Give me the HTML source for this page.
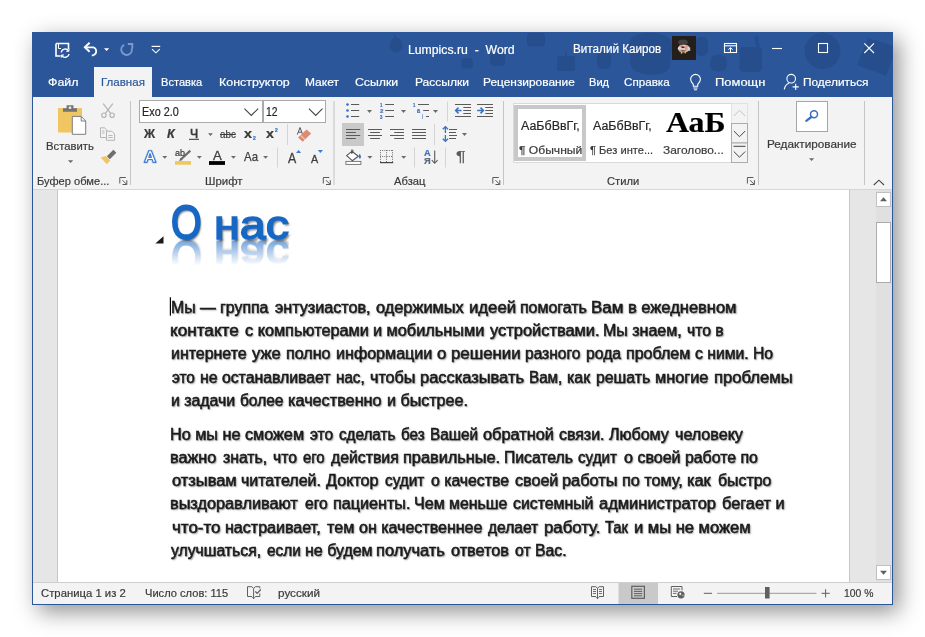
<!DOCTYPE html>
<html lang="ru"><head><meta charset="utf-8"><title>Lumpics.ru - Word</title>
<style>
html,body{margin:0;padding:0;background:#fff;}
body{width:925px;height:637px;position:relative;overflow:hidden;font-family:"Liberation Sans",sans-serif;}
.a{position:absolute;}
.t{position:absolute;white-space:pre;transform-origin:0 0;display:block;-webkit-text-stroke:0.2px currentColor;}
#win{position:absolute;left:32px;top:32px;width:861px;height:573px;background:#f3f3f3;box-shadow:6px 7px 21px rgba(0,0,0,0.43);}
#title{position:absolute;left:32px;top:32px;width:861px;height:65px;background:#2b579a;}
#tab{position:absolute;left:94px;top:67px;width:58px;height:30px;background:#f3f3f3;}
#ribbon{position:absolute;left:33px;top:97px;width:859px;height:92px;background:#f3f3f3;}
#ribline{position:absolute;left:33px;top:189px;width:859px;height:1px;background:#d6d6d6;}
#doc{position:absolute;left:33px;top:190px;width:859px;height:392px;background:#e6e6e6;}
#page{position:absolute;left:57px;top:190px;width:793px;height:392px;background:#fff;border-right:1px solid #c6c6c6;border-left:1px solid #c6c6c6;box-sizing:border-box;}
#status{position:absolute;left:33px;top:582px;width:859px;height:22px;background:#f3f3f3;}
.bl{position:absolute;background:#2b579a;}
.sep{position:absolute;width:1px;background:#d2d2d2;}
</style></head><body>
<div id="win"></div>
<div id="title"></div>
<div id="tab"></div>
<div id="ribbon"></div><div id="ribline"></div>
<div id="doc"></div><div id="page"></div>
<div id="status"></div>
<!-- window border -->
<div class="bl" style="left:32px;top:97px;width:1px;height:508px"></div>
<div class="bl" style="left:892px;top:97px;width:1px;height:508px"></div>
<div class="bl" style="left:32px;top:604px;width:861px;height:1px"></div>
<svg class="a" style="left:0;top:0" width="925" height="637" viewBox="0 0 925 637">
<!-- title bar background pattern -->
<clipPath id="tbc"><rect x="32" y="32" width="861" height="65"/></clipPath>
<g fill="#264e8c" clip-path="url(#tbc)">
 <ellipse cx="396" cy="45" rx="6.500" ry="7.500"/><rect x="394" y="35.500" width="2" height="4" />
 <rect x="490" y="53" width="15" height="13" rx="4"/>
 <rect x="461" y="58" width="12" height="10.500" rx="4"/>
 <rect x="527" y="33" width="18" height="13.500" rx="4"/>
 <rect x="557" y="56" width="18" height="15" rx="3"/><rect x="565" y="51" width="1.500" height="6"/>
 <path d="M633 37 C640 31 662 32 669 38 C675 44 672 52 670 58 C672 66 668 74 658 74 C648 76 640 74 634 70 C627 64 631 56 630 50 C628 44 629 40 633 37 Z"/>
 <rect x="695" y="37" width="13" height="19" rx="6"/>
 <path d="M712 57 C716 53 723 54 726 58 C728 62 727 68 725 70 C720 72 714 72 711 69 C709 65 710 60 712 57 Z"/>
 <rect x="739.500" y="47" width="22.500" height="25" rx="4"/><path d="M754 37 L758 36 L759.500 47 L756.500 47 Z"/>
 <circle cx="822.500" cy="51" r="18"/><rect x="821" y="30" width="3" height="6"/>
 <path d="M868 38 L897 47 L886 76 L857 65 Z"/>
 <rect x="597" y="52" width="14" height="17" rx="5"/>
</g>
<!-- title bar icons -->
<g fill="none" stroke="#fff" stroke-width="1.2">
 <!-- save/autosave -->
 <path d="M56 43.5 H68.5 V49 M56 43.5 V56 H60.5" stroke-width="1.6"/>
 <path d="M58.5 44 V48.5 H61" stroke-width="1"/>
 <path d="M61.2 52.5 A4 4 0 0 1 68.6 51 M69 54 A4 4 0 0 1 61.6 55.3" stroke-width="1.3"/>
 <path d="M68.9 48.6 V51.3 H66.2 M61.3 57.6 V55 H64" stroke-width="1"/>
 <!-- undo -->
 <path d="M84.8 47.3 H93.3 A4.2 4.2 0 0 1 93.3 55.3 H91.8" stroke-width="1.7"/>
 <path d="M89.6 42.800 L84.900 47.300 L89.600 51.800" stroke-width="2"/>
 <!-- customize -->
 <path d="M151.6 46.4 H160.2" stroke-width="1.2"/>
 <path d="M152 49.2 L155.9 52.8 L159.8 49.2" stroke-width="1.1"/>
 <!-- ribbon display -->
 <rect x="724.5" y="43.5" width="12" height="9" stroke-width="1.1"/>
 <path d="M724.5 45.8 H736.5" stroke-width="1.1"/>
 <path d="M730.5 52 V47.8 M728.3 49.8 L730.5 47.6 L732.7 49.8" stroke-width="1"/>
 <!-- min max close -->
 <path d="M772 48.5 H782" stroke-width="1.1"/>
 <rect x="818.5" y="43.5" width="9" height="9" stroke-width="1.1"/>
 <path d="M864.3 43.3 L874 53 M874 43.3 L864.3 53" stroke-width="1.1"/>
 <!-- bulb -->
 <path d="M693.3 86.3 V84.2 C692 82.8 690.6 81.6 690.6 79.3 A4.9 4.9 0 0 1 700.4 79.3 C700.4 81.6 699 82.800 697.7 84.2 V86.3 Z" stroke-width="1.1"/>
 <path d="M693.3 88.0 H697.7 M694 89.8 H697" stroke-width="1"/>
 <!-- share -->
 <circle cx="791.2" cy="78.7" r="4.3" stroke-width="1.1"/>
 <path d="M784.3 89.3 C784.8 85.8 786.8 84 789 83.2" stroke-width="1.1"/>
 <path d="M792.6 86.9 H798.8 M795.7 83.8 V90" stroke-width="1.1"/>
</g>
<!-- undo dropdown -->
<path d="M104 48.2 H109.2 L106.6 50.9 Z" fill="#fff"/>
<!-- redo (dim) -->
<g fill="none" stroke="#7d9bcd" stroke-width="1.900">
 <path d="M124.200 44.900 A5.300 5.300 0 1 0 131.700 48.200"/>
 <path d="M127.800 44 H132.300 V48.600" stroke-width="1.800"/>
</g>
<!-- avatar -->
<rect x="672" y="36" width="24" height="24" fill="#241f1c"/>
<ellipse cx="683" cy="42.300" rx="4.800" ry="2.800" fill="#45413f"/>
<ellipse cx="683.800" cy="48.500" rx="6" ry="3.800" fill="#ddd8d4"/>
<rect x="679.800" y="45.200" width="3.400" height="2" fill="#f0927a"/>
<rect x="685" y="45.500" width="2.600" height="5" fill="#f0927a"/>
<rect x="679" y="49.500" width="3.500" height="2" fill="#f0927a"/>
<rect x="681.500" y="46.500" width="3" height="1.600" fill="#2a2a35"/>
<rect x="681.500" y="50.400" width="4" height="1" fill="#2a2a2a"/>
<rect x="680.800" y="52" width="1.600" height="1.600" fill="#f4c430"/><rect x="684.500" y="51.700" width="1.600" height="1.600" fill="#f4c430"/>
<rect x="689.200" y="47.500" width="1" height="3.500" fill="#ddd8d4"/>

<!-- clipboard group -->
<rect x="58" y="108" width="24" height="24.5" fill="#efc662"/>
<path d="M63 111.8 V108.3 H66.6 V105.2 H73.4 V108.3 H77 V111.8 Z" fill="#737373"/>
<rect x="68.8" y="106.6" width="2.4" height="2.2" fill="#f3f3f3"/>
<path d="M72.3 116.4 H81.2 L85.7 121 V134.3 H72.3 Z" fill="#fff" stroke="#7d7d7d" stroke-width="1"/>
<path d="M81.2 116.4 V121 H85.7" fill="none" stroke="#7d7d7d" stroke-width="1"/>
<path d="M68 160.2 H73.2 L70.6 163 Z" fill="#6a6a6a"/>
<!-- scissors -->
<g fill="none" stroke="#b4b4b4" stroke-width="1.2">
 <path d="M103.2 103.6 L110.6 113.4 M112.8 103.600 L105.4 113.4"/>
 <circle cx="103.9" cy="115.2" r="2.2"/><circle cx="112.1" cy="115.2" r="2.2"/>
</g>
<!-- copy -->
<g fill="#f3f3f3" stroke="#b4b4b4" stroke-width="1">
 <path d="M100.5 127.800 H104.5 L106.800 130 V137.500 H100.5 Z"/>
 <path d="M106.5 131.2 H111.800 L114.6 134 V140.300 H106.5 Z"/>
 <path d="M108.3 135.5 H112.700 M108.300 137.500 H112.700" stroke-width="0.9"/>
 <path d="M102 131 H104.5 M102 133 H104.5" stroke-width="0.9"/>
</g>
<!-- format painter -->
<path d="M113.400 149.800 L116.300 152.700 L109.800 159.200 L106.900 156.300 Z" fill="#6e6e6e"/>
<path d="M105.800 156 L110.200 160.400 L106.800 164.200 L100.600 157.600 Z" fill="#efc662"/>

<!-- font group -->
<rect x="139.500" y="100.500" width="123" height="22" fill="#fff" stroke="#ababab"/>
<rect x="263.500" y="100.500" width="62" height="22" fill="#fff" stroke="#ababab"/>
<path d="M244.400 108.600 L251.300 115.500 L258.200 108.600" fill="none" stroke="#444" stroke-width="1.100"/>
<path d="M308.900 108.600 L315.700 115.500 L322.500 108.600" fill="none" stroke="#444" stroke-width="1.100"/>
<!-- underline of Ч -->
<rect x="189" y="138.800" width="10" height="1.100" fill="#444"/>
<g fill="#6a6a6a">
<path d="M208 133.200 H212.900 L210.450 135.900 Z"/>
<path d="M162.300 156 H167.200 L164.750 158.800 Z"/>
<path d="M196.900 156 H201.800 L199.350 158.800 Z"/>
<path d="M231 156 H235.900 L233.450 158.800 Z"/>
<path d="M263.100 156 H268 L265.550 158.800 Z"/>
</g>
<rect x="287" y="124" width="1" height="21" fill="#d4d4d4"/>
<rect x="277" y="147.500" width="1" height="20" fill="#d4d4d4"/>
<!-- clear formatting -->
<path d="M297.300 134.600 L300 127.500 L302.700 134.600 M298.300 132.200 H301.700" fill="none" stroke="#555" stroke-width="1"/>
<path d="M306.500 129.500 L311.200 133.500 L302.700 141.800 L298 137.600 Z" fill="#e08b71"/>
<path d="M300.500 135.300 L305 139.500" stroke="#f3f3f3" stroke-width="0.9"/>
<!-- text effects A -->
<path d="M144.300 162.300 L148.800 150.700 H151.400 L155.900 162.300 H153.100 L152.150 159.500 H148 L147.050 162.300 Z M148.800 157.300 H151.350 L150.100 153.500 Z" fill="#fff" stroke="#c3d8f2" stroke-width="2.600" stroke-linejoin="round" fill-rule="evenodd"/>
<path d="M144.300 162.300 L148.800 150.700 H151.400 L155.900 162.300 H153.100 L152.150 159.500 H148 L147.050 162.300 Z M148.800 157.300 H151.350 L150.100 153.500 Z" fill="#fff" stroke="#3b7bd0" stroke-width="1.150" stroke-linejoin="round" fill-rule="evenodd"/>
<!-- highlighter -->
<rect x="175" y="161.100" width="16" height="3.600" fill="#f0c75e"/>
<path d="M190.300 150.700 L180.800 159.500" stroke="#6e6e6e" stroke-width="2.300" fill="none"/>
<path d="M180.600 157.800 L179 161.300 L182.600 160" fill="#6e6e6e"/>
<!-- font color bar -->
<rect x="209" y="161.100" width="16" height="3.800" fill="#000"/>
<!-- grow/shrink triangles -->
<path d="M296 153 L298.600 150.100 L301.200 153 Z" fill="#3b7bd0"/>
<path d="M317.800 150.100 H323 L320.400 153 Z" fill="#3b7bd0"/>

<!-- paragraph group -->
<rect x="342" y="123" width="22" height="23" fill="#c9c9c9"/>
<g fill="#3b6fc0">
 <circle cx="347.500" cy="104.500" r="1.350"/><circle cx="347.500" cy="110.500" r="1.350"/><circle cx="347.500" cy="116.500" r="1.350"/>
</g>
<g stroke="#5a5a5a" stroke-width="1.200" fill="none">
 <path d="M351 104.500 H359.200 M351 110.500 H359.200 M351 116.500 H359.200"/>
 <path d="M385.200 104.500 H394 M385.200 110.500 H394 M385.200 116.500 H394"/>
 <path d="M418 104.500 H429 M423.200 110.500 H429 M426 116.500 H429"/>
 <!-- align icons -->
 <path d="M346 129.500 H360.200 M346 132.500 H355.800 M346 135.500 H360.200 M346 138.500 H355.800"/>
 <path d="M368 129.500 H382 M370.100 132.500 H379.900 M368 135.500 H382 M370.100 138.500 H379.900"/>
 <path d="M390 129.500 H404 M394.200 132.500 H404 M390 135.500 H404 M394.200 138.500 H404"/>
 <path d="M412 129.500 H426 M412 132.500 H426 M412 135.500 H426 M412 138.500 H426"/>
 <!-- indent icons -->
 <path d="M455 104.500 H471 M463.300 107.500 H471 M463.300 110.500 H471 M463.300 113.500 H471 M455 116.500 H471"/>
 <path d="M477 104.500 H493 M485.300 107.500 H493 M485.300 110.500 H493 M485.300 113.500 H493 M477 116.500 H493"/>
 <!-- line spacing lines -->
 <path d="M449 129.500 H457 M449 132.500 H456 M449 135.500 H457 M449 138.500 H456"/>
</g>
<g fill="#6a6a6a">
 <path d="M367 110.100 H372 L369.500 112.900 Z"/>
 <path d="M401 110.100 H406 L403.500 112.900 Z"/>
 <path d="M433 110.100 H438 L435.500 112.900 Z"/>
 <path d="M462 133 H467 L464.500 135.900 Z"/>
 <path d="M367.400 156 H372.400 L369.900 158.800 Z"/>
 <path d="M401.200 156 H406.200 L403.700 158.800 Z"/>
</g>
<g stroke="#3b6fc0" stroke-width="1.500" fill="none">
 <path d="M455.600 110.500 H461.500 M458.500 107.600 L455.600 110.500 L458.500 113.400"/>
 <path d="M477.200 110.500 H483.400 M480.500 107.600 L483.400 110.500 L480.500 113.400"/>
 <path d="M445.400 126.700 V133 M442.800 129.300 L445.400 126.600 L448 129.300" stroke-width="1.300"/>
 <path d="M445.400 135 V141.300 M442.800 138.700 L445.400 141.400 L448 138.700" stroke-width="1.300"/>
</g>
<rect x="447" y="101.500" width="1" height="20" fill="#d4d4d4"/>
<rect x="434" y="124" width="1" height="21" fill="#d4d4d4"/>
<rect x="414" y="147.500" width="1" height="20" fill="#d4d4d4"/>
<rect x="445" y="147.500" width="1" height="20" fill="#d4d4d4"/>
<!-- shading -->
<rect x="345.900" y="161.400" width="15" height="3" fill="#fff" stroke="#6e6e6e" stroke-width="0.900"/>
<path d="M351.800 151.300 L358.300 156.300 L352.300 160.700 L346.600 155.600 Z" fill="#fff" stroke="#555" stroke-width="1.100" stroke-linejoin="round"/>
<path d="M351.800 154 V149.700 L353.800 151.200" fill="none" stroke="#555" stroke-width="1"/>
<path d="M359.600 153.800 C361.300 156 361.500 158 359.900 158.700 C358.400 158 358.500 156 359.600 153.800 Z" fill="#3b6fc0"/>
<!-- borders -->
<g stroke="#6e6e6e" stroke-width="1" stroke-dasharray="1 1.200" fill="none">
 <path d="M380 150.500 H393 M380 156.500 H393 M380.500 150 V162 M386.500 150 V162 M392.500 150 V162"/>
</g>
<path d="M380 162.600 H393.200" stroke="#444" stroke-width="1.200"/>
<!-- sort arrow -->
<path d="M434.700 150.500 V163 M431.800 160.200 L434.700 163.300 L437.600 160.200" fill="none" stroke="#5a5a5a" stroke-width="1.100"/>

<!-- group separators -->
<g fill="#c4c4c4">
<rect x="130" y="101" width="1" height="84"/><rect x="333.500" y="101" width="1" height="84"/>
<rect x="503" y="101" width="1" height="84"/><rect x="758" y="101" width="1" height="84"/><rect x="864" y="101" width="1" height="84"/>
</g>
<!-- launchers -->
<defs><g id="ln" fill="none" stroke="#5a5a5a" stroke-width="1">
 <path d="M0.500 6.500 V0.500 H6.500"/><path d="M3.200 3.200 L7.300 7.300"/><path d="M7.500 3.200 V7.500 H3.200"/>
</g></defs>
<use href="#ln" x="119.300" y="177"/><use href="#ln" x="322.800" y="177"/><use href="#ln" x="492.300" y="177"/><use href="#ln" x="746.900" y="177"/>
<!-- styles gallery -->
<rect x="513.500" y="103.500" width="234" height="59" fill="#fff" stroke="#dadada"/>
<rect x="516" y="107" width="68" height="52" fill="#fff" stroke="#c8c8c8" stroke-width="4"/>
<rect x="731.500" y="103.500" width="16" height="20" fill="#f3f3f3" stroke="#e1e1e1"/>
<rect x="731.500" y="123.500" width="16" height="19.500" fill="#f3f3f3" stroke="#ababab"/>
<rect x="731.500" y="143" width="16" height="19.500" fill="#f3f3f3" stroke="#ababab"/>
<path d="M733.800 116 L739.500 110.300 L745.200 116" fill="none" stroke="#c4c4c4" stroke-width="1"/>
<path d="M733.800 131 L739.500 136.700 L745.200 131" fill="none" stroke="#444" stroke-width="1"/>
<path d="M733.500 146.300 H745.500 M733.800 151.500 L739.500 157.200 L745.200 151.500" fill="none" stroke="#444" stroke-width="1"/>
<!-- editing -->
<rect x="796.500" y="101.500" width="31" height="30" fill="#fff" stroke="#a6a6a6"/>
<circle cx="814" cy="114.300" r="3.500" fill="none" stroke="#3b6fc0" stroke-width="1.500"/>
<path d="M811.300 117 L806.300 120.800" stroke="#3b6fc0" stroke-width="2.200" stroke-linecap="round"/>
<path d="M809 158.300 H814.200 L811.600 161.100 Z" fill="#6a6a6a"/>
<path d="M873.800 185 L878.900 180.200 L884 185" fill="none" stroke="#444" stroke-width="1.100"/>
<!-- doc collapse triangle -->
<path d="M163.500 236.300 V243.600 H155.300 Z" fill="#1a1a1a"/>
<!-- cursor -->
<rect x="169.800" y="297.300" width="1.200" height="18.400" fill="#000"/>
<!-- scrollbar -->
<rect x="876" y="190" width="16" height="392" fill="#dfe0df"/>
<rect x="876.500" y="192.500" width="14" height="14" fill="#fff" stroke="#c0c0c0"/>
<path d="M880 201.200 L883.500 197.200 L887 201.200 Z" fill="#606060"/>
<rect x="876.500" y="222.500" width="14" height="60" fill="#fff" stroke="#ababab"/>
<rect x="876.500" y="565.500" width="14" height="14" fill="#fff" stroke="#c0c0c0"/>
<path d="M880 570.800 H887 L883.500 574.800 Z" fill="#606060"/>
<!-- status bar -->
<rect x="33" y="582" width="859" height="1" fill="#cfcfcf"/>
<rect x="618.500" y="583" width="39.500" height="21" fill="#c9c9c9"/>
<g fill="none" stroke="#5f5f5f" stroke-width="1">
 <!-- book/spell -->
 <path d="M253.600 598.600 V588.400 L251.800 586.700 H247.500 V596.500 H252"/>
 <path d="M253.600 588.400 L255.400 586.700 H259.800 V588.500 M259.800 593.500 V596.500 H255.200"/>
 <path d="M255.300 591.500 L257.200 593.300 L260.800 589.500" stroke-width="1.200"/>
 <path d="M252.200 597.200 L253.600 598.700 L255 597.200" />
 <!-- read mode -->
 <path d="M597.500 598.600 V588.200 L595.800 586.700 H591.500 V596.500 H596"/>
 <path d="M597.500 588.200 L599.200 586.700 H603.500 V596.500 H599"/>
 <path d="M593 589.500 H596 M593 591.500 H596 M593 593.500 H596 M599 589.500 H602 M599 591.500 H602 M599 593.500 H602" stroke-width="0.900"/>
 <path d="M596.100 597.200 L597.500 598.700 L598.900 597.200"/>
 <!-- print layout -->
 <rect x="631.800" y="586.300" width="12.600" height="12" stroke-width="1.200"/>
 <path d="M634 589.200 H642.200 M634 591.400 H642.200 M634 593.600 H642.200 M634 595.800 H642.200" stroke-width="1"/>
 <!-- web layout -->
 <path d="M677 596.500 H671.300 V586.500 H682 V590.300"/>
 <path d="M673 589 H680.200 M673 591.200 H678 M673 593.400 H676.500" stroke-width="0.900"/>
</g>
<circle cx="681" cy="594.800" r="3.600" fill="#5f5f5f"/>
<path d="M679 593.500 L680.500 592.500 L681.500 594 L680 595.500 Z M682.300 595 L683.500 594.500 L683.200 596.500 Z" fill="#f3f3f3"/>
<!-- zoom slider -->
<rect x="703.800" y="592.800" width="8.200" height="1" fill="#5f5f5f"/>
<rect x="717" y="592.800" width="99.500" height="1" fill="#9a9a9a"/>
<rect x="765" y="587" width="4.600" height="11.500" fill="#5f5f5f"/>
<rect x="821.500" y="592.800" width="8.200" height="1" fill="#5f5f5f"/>
<rect x="825.100" y="589.200" width="1" height="8.200" fill="#5f5f5f"/>

</svg>
<span class="t" style="left:408.00px;top:44.01px;font-size:12.2px;line-height:12.2px;color:#ffffff;transform:scaleX(1.0045);">Lumpics.ru  -  Word</span>
<span class="t" style="left:572.70px;top:43.00px;font-size:12px;line-height:12px;color:#ffffff;transform:scaleX(0.9745);">Виталий Каиров</span>
<span class="t" style="left:47.60px;top:76.01px;font-size:11.6px;line-height:11.6px;color:#ffffff;transform:scaleX(1.0707);">Файл</span>
<span class="t" style="left:161.20px;top:76.01px;font-size:11.6px;line-height:11.6px;color:#ffffff;transform:scaleX(0.9555);">Вставка</span>
<span class="t" style="left:218.80px;top:76.01px;font-size:11.6px;line-height:11.6px;color:#ffffff;transform:scaleX(1.0707);">Конструктор</span>
<span class="t" style="left:305.00px;top:76.01px;font-size:11.6px;line-height:11.6px;color:#ffffff;transform:scaleX(1.0328);">Макет</span>
<span class="t" style="left:355.30px;top:76.01px;font-size:11.6px;line-height:11.6px;color:#ffffff;transform:scaleX(1.0585);">Ссылки</span>
<span class="t" style="left:414.50px;top:76.01px;font-size:11.6px;line-height:11.6px;color:#ffffff;transform:scaleX(1.0376);">Рассылки</span>
<span class="t" style="left:483.20px;top:76.01px;font-size:11.6px;line-height:11.6px;color:#ffffff;transform:scaleX(1.0261);">Рецензирование</span>
<span class="t" style="left:589.20px;top:76.01px;font-size:11.6px;line-height:11.6px;color:#ffffff;transform:scaleX(0.9571);">Вид</span>
<span class="t" style="left:624.10px;top:76.01px;font-size:11.6px;line-height:11.6px;color:#ffffff;transform:scaleX(1.0036);">Справка</span>
<span class="t" style="left:714.80px;top:76.01px;font-size:11.6px;line-height:11.6px;color:#ffffff;transform:scaleX(1.1154);">Помощн</span>
<span class="t" style="left:803.00px;top:76.01px;font-size:11.6px;line-height:11.6px;color:#ffffff;transform:scaleX(1.0229);">Поделиться</span>
<span class="t" style="left:101.20px;top:76.01px;font-size:11.6px;line-height:11.6px;color:#2b579a;transform:scaleX(0.9943);">Главная</span>
<span class="t" style="left:46.20px;top:141.00px;font-size:11.5px;line-height:11.5px;color:#3a3a3a;transform:scaleX(0.9804);">Вставить</span>
<span class="t" style="left:36.80px;top:176.00px;font-size:11.5px;line-height:11.5px;color:#3a3a3a;transform:scaleX(0.9654);">Буфер обме...</span>
<span class="t" style="left:141.80px;top:106.00px;font-size:12px;line-height:12px;color:#262626;transform:scaleX(0.9020);">Exo 2.0</span>
<span class="t" style="left:266.20px;top:106.00px;font-size:12px;line-height:12px;color:#262626;transform:scaleX(0.8630);">12</span>
<span class="t" style="left:204.80px;top:176.00px;font-size:11.5px;line-height:11.5px;color:#3a3a3a;transform:scaleX(0.9904);">Шрифт</span>
<span class="t" style="left:394.20px;top:176.00px;font-size:11.5px;line-height:11.5px;color:#3a3a3a;transform:scaleX(0.9733);">Абзац</span>
<span class="t" style="left:607.20px;top:176.00px;font-size:11.5px;line-height:11.5px;color:#3a3a3a;transform:scaleX(0.9723);">Стили</span>
<span class="t" style="left:521.00px;top:120.00px;font-size:12.5px;line-height:12.5px;color:#262626;transform:scaleX(0.9953);">АаБбВвГг,</span>
<span class="t" style="left:518.60px;top:145.00px;font-size:11.5px;line-height:11.5px;color:#3a3a3a;transform:scaleX(1.0506);">¶ Обычный</span>
<span class="t" style="left:593.10px;top:120.00px;font-size:12.5px;line-height:12.5px;color:#262626;transform:scaleX(0.9953);">АаБбВвГг,</span>
<span class="t" style="left:590.00px;top:145.00px;font-size:11.5px;line-height:11.5px;color:#3a3a3a;transform:scaleX(0.9658);">¶ Без инте...</span>
<span class="t" style="left:665.60px;top:108.00px;font-size:29.5px;line-height:29.5px;color:#000000;transform:scaleX(1.0808);font-family:'Liberation Serif', serif;font-weight:bold;">АаБ</span>
<span class="t" style="left:663.00px;top:145.00px;font-size:11.5px;line-height:11.5px;color:#3a3a3a;transform:scaleX(1.0372);">Заголово...</span>
<span class="t" style="left:767.10px;top:139.00px;font-size:11.5px;line-height:11.5px;color:#3a3a3a;transform:scaleX(1.0228);">Редактирование</span>
<span class="t" style="left:144.48px;top:128.00px;font-size:12.5px;line-height:12.5px;color:#3a3a3a;transform:scaleX(0.9769);font-weight:bold;">Ж</span>
<span class="t" style="left:167.20px;top:128.00px;font-size:12.5px;line-height:12.5px;color:#3a3a3a;transform:scaleX(1.0111);font-weight:bold;font-style:italic;">К</span>
<span class="t" style="left:189.60px;top:128.00px;font-size:12.5px;line-height:12.5px;color:#3a3a3a;transform:scaleX(0.9750);-webkit-text-stroke:0.7px #3a3a3a;">Ч</span>
<span class="t" style="left:220.00px;top:129.00px;font-size:11.5px;line-height:11.5px;color:#3a3a3a;transform:scaleX(0.8514);text-decoration:line-through;">abc</span>
<span class="t" style="left:244.20px;top:128.00px;font-size:12.5px;line-height:12.5px;color:#3a3a3a;transform:scaleX(1.1571);font-weight:bold;">x</span>
<span class="t" style="left:252.80px;top:134.80px;font-size:6px;line-height:6px;color:#2b6cc4;transform:scaleX(0.8500);font-weight:bold;">2</span>
<span class="t" style="left:266.20px;top:128.00px;font-size:12.5px;line-height:12.5px;color:#3a3a3a;transform:scaleX(1.1429);font-weight:bold;">x</span>
<span class="t" style="left:274.90px;top:127.21px;font-size:6px;line-height:6px;color:#2b6cc4;transform:scaleX(0.8250);font-weight:bold;">2</span>
<span class="t" style="left:243.50px;top:150.00px;font-size:13px;line-height:13px;color:#3a3a3a;transform:scaleX(0.8818);-webkit-text-stroke:0.25px #444;">Aa</span>
<span class="t" style="left:212.80px;top:149.00px;font-size:13.5px;line-height:13.5px;color:#3a3a3a;transform:scaleX(0.9778);-webkit-text-stroke:0.3px #444;">A</span>
<span class="t" style="left:288.40px;top:151.00px;font-size:14px;line-height:14px;color:#3a3a3a;transform:scaleX(0.8800);-webkit-text-stroke:0.3px #444;">A</span>
<span class="t" style="left:311.20px;top:154.00px;font-size:11.5px;line-height:11.5px;color:#3a3a3a;transform:scaleX(0.9375);-webkit-text-stroke:0.3px #444;">A</span>
<span class="t" style="left:41.40px;top:588.00px;font-size:11.5px;line-height:11.5px;color:#3a3a3a;transform:scaleX(0.9837);">Страница 1 из 2</span>
<span class="t" style="left:145.20px;top:588.00px;font-size:11.5px;line-height:11.5px;color:#3a3a3a;transform:scaleX(0.9663);">Число слов: 115</span>
<span class="t" style="left:278.40px;top:588.00px;font-size:11.5px;line-height:11.5px;color:#3a3a3a;transform:scaleX(1.0185);">русский</span>
<span class="t" style="left:844.00px;top:588.00px;font-size:11.5px;line-height:11.5px;color:#3a3a3a;transform:scaleX(0.9017);">100 %</span>
<span class="t" style="left:171.31px;top:300.00px;font-size:16px;line-height:16px;color:#1a1a1a;transform:scaleX(0.9877);text-shadow:1px 1.2px 1.6px rgba(0,0,0,0.5);-webkit-text-stroke:0.55px #1a1a1a;">Мы — группа</span>
<span class="t" style="left:274.80px;top:300.00px;font-size:16px;line-height:16px;color:#1a1a1a;transform:scaleX(1.0093);text-shadow:1px 1.2px 1.6px rgba(0,0,0,0.5);-webkit-text-stroke:0.55px #1a1a1a;">энтузиастов,</span>
<span class="t" style="left:376.00px;top:300.00px;font-size:16px;line-height:16px;color:#1a1a1a;transform:scaleX(1.0219);text-shadow:1px 1.2px 1.6px rgba(0,0,0,0.5);-webkit-text-stroke:0.55px #1a1a1a;">одержимых</span>
<span class="t" style="left:468.76px;top:300.00px;font-size:16px;line-height:16px;color:#1a1a1a;transform:scaleX(1.0448);text-shadow:1px 1.2px 1.6px rgba(0,0,0,0.5);-webkit-text-stroke:0.55px #1a1a1a;">идеей</span>
<span class="t" style="left:519.90px;top:300.00px;font-size:16px;line-height:16px;color:#1a1a1a;transform:scaleX(0.9951);text-shadow:1px 1.2px 1.6px rgba(0,0,0,0.5);-webkit-text-stroke:0.55px #1a1a1a;">помогать</span>
<span class="t" style="left:591.44px;top:300.00px;font-size:16px;line-height:16px;color:#1a1a1a;transform:scaleX(1.0570);text-shadow:1px 1.2px 1.6px rgba(0,0,0,0.5);-webkit-text-stroke:0.55px #1a1a1a;">Вам</span>
<span class="t" style="left:627.77px;top:300.00px;font-size:16px;line-height:16px;color:#1a1a1a;transform:scaleX(1.0308);text-shadow:1px 1.2px 1.6px rgba(0,0,0,0.5);-webkit-text-stroke:0.55px #1a1a1a;">в ежедневном</span>
<span class="t" style="left:170.43px;top:323.00px;font-size:16px;line-height:16px;color:#1a1a1a;transform:scaleX(1.0713);text-shadow:1px 1.2px 1.6px rgba(0,0,0,0.5);-webkit-text-stroke:0.55px #1a1a1a;">контакте</span>
<span class="t" style="left:245.40px;top:323.00px;font-size:16px;line-height:16px;color:#1a1a1a;transform:scaleX(1.0147);text-shadow:1px 1.2px 1.6px rgba(0,0,0,0.5);-webkit-text-stroke:0.55px #1a1a1a;">с компьютерами</span>
<span class="t" style="left:373.28px;top:323.00px;font-size:16px;line-height:16px;color:#1a1a1a;transform:scaleX(1.0178);text-shadow:1px 1.2px 1.6px rgba(0,0,0,0.5);-webkit-text-stroke:0.55px #1a1a1a;">и мобильными</span>
<span class="t" style="left:489.70px;top:323.00px;font-size:16px;line-height:16px;color:#1a1a1a;transform:scaleX(1.0259);text-shadow:1px 1.2px 1.6px rgba(0,0,0,0.5);-webkit-text-stroke:0.55px #1a1a1a;">устройствами.</span>
<span class="t" style="left:602.90px;top:323.00px;font-size:16px;line-height:16px;color:#1a1a1a;transform:scaleX(0.9995);text-shadow:1px 1.2px 1.6px rgba(0,0,0,0.5);-webkit-text-stroke:0.55px #1a1a1a;">Мы знаем,</span>
<span class="t" style="left:687.20px;top:323.00px;font-size:16px;line-height:16px;color:#1a1a1a;transform:scaleX(0.9829);text-shadow:1px 1.2px 1.6px rgba(0,0,0,0.5);-webkit-text-stroke:0.55px #1a1a1a;">что в</span>
<span class="t" style="left:170.50px;top:346.00px;font-size:16px;line-height:16px;color:#1a1a1a;transform:scaleX(0.9951);text-shadow:1px 1.2px 1.6px rgba(0,0,0,0.5);-webkit-text-stroke:0.55px #1a1a1a;">интернете</span>
<span class="t" style="left:252.30px;top:346.00px;font-size:16px;line-height:16px;color:#1a1a1a;transform:scaleX(1.0329);text-shadow:1px 1.2px 1.6px rgba(0,0,0,0.5);-webkit-text-stroke:0.55px #1a1a1a;">уже</span>
<span class="t" style="left:286.19px;top:346.00px;font-size:16px;line-height:16px;color:#1a1a1a;transform:scaleX(1.0050);text-shadow:1px 1.2px 1.6px rgba(0,0,0,0.5);-webkit-text-stroke:0.55px #1a1a1a;">полно</span>
<span class="t" style="left:335.89px;top:346.00px;font-size:16px;line-height:16px;color:#1a1a1a;transform:scaleX(1.0071);text-shadow:1px 1.2px 1.6px rgba(0,0,0,0.5);-webkit-text-stroke:0.55px #1a1a1a;">информации</span>
<span class="t" style="left:437.40px;top:346.00px;font-size:16px;line-height:16px;color:#1a1a1a;transform:scaleX(1.0502);text-shadow:1px 1.2px 1.6px rgba(0,0,0,0.5);-webkit-text-stroke:0.55px #1a1a1a;">о решении</span>
<span class="t" style="left:525.13px;top:346.00px;font-size:16px;line-height:16px;color:#1a1a1a;transform:scaleX(0.9702);text-shadow:1px 1.2px 1.6px rgba(0,0,0,0.5);-webkit-text-stroke:0.55px #1a1a1a;">разного</span>
<span class="t" style="left:585.72px;top:346.00px;font-size:16px;line-height:16px;color:#1a1a1a;transform:scaleX(0.9833);text-shadow:1px 1.2px 1.6px rgba(0,0,0,0.5);-webkit-text-stroke:0.55px #1a1a1a;">рода</span>
<span class="t" style="left:626.00px;top:346.00px;font-size:16px;line-height:16px;color:#1a1a1a;transform:scaleX(1.0010);text-shadow:1px 1.2px 1.6px rgba(0,0,0,0.5);-webkit-text-stroke:0.55px #1a1a1a;">проблем</span>
<span class="t" style="left:695.30px;top:346.00px;font-size:16px;line-height:16px;color:#1a1a1a;transform:scaleX(0.9824);text-shadow:1px 1.2px 1.6px rgba(0,0,0,0.5);-webkit-text-stroke:0.55px #1a1a1a;">с ними. Но</span>
<span class="t" style="left:171.50px;top:370.00px;font-size:16px;line-height:16px;color:#1a1a1a;transform:scaleX(0.9599);text-shadow:1px 1.2px 1.6px rgba(0,0,0,0.5);-webkit-text-stroke:0.55px #1a1a1a;">это</span>
<span class="t" style="left:199.61px;top:370.00px;font-size:16px;line-height:16px;color:#1a1a1a;transform:scaleX(0.9875);text-shadow:1px 1.2px 1.6px rgba(0,0,0,0.5);-webkit-text-stroke:0.55px #1a1a1a;">не останавливает</span>
<span class="t" style="left:335.95px;top:370.00px;font-size:16px;line-height:16px;color:#1a1a1a;transform:scaleX(0.9501);text-shadow:1px 1.2px 1.6px rgba(0,0,0,0.5);-webkit-text-stroke:0.55px #1a1a1a;">нас,</span>
<span class="t" style="left:370.30px;top:370.00px;font-size:16px;line-height:16px;color:#1a1a1a;transform:scaleX(1.0079);text-shadow:1px 1.2px 1.6px rgba(0,0,0,0.5);-webkit-text-stroke:0.55px #1a1a1a;">чтобы</span>
<span class="t" style="left:420.27px;top:370.00px;font-size:16px;line-height:16px;color:#1a1a1a;transform:scaleX(1.0270);text-shadow:1px 1.2px 1.6px rgba(0,0,0,0.5);-webkit-text-stroke:0.55px #1a1a1a;">рассказывать</span>
<span class="t" style="left:529.05px;top:370.00px;font-size:16px;line-height:16px;color:#1a1a1a;transform:scaleX(0.9502);text-shadow:1px 1.2px 1.6px rgba(0,0,0,0.5);-webkit-text-stroke:0.55px #1a1a1a;">Вам,</span>
<span class="t" style="left:567.01px;top:370.00px;font-size:16px;line-height:16px;color:#1a1a1a;transform:scaleX(0.9935);text-shadow:1px 1.2px 1.6px rgba(0,0,0,0.5);-webkit-text-stroke:0.55px #1a1a1a;">как</span>
<span class="t" style="left:596.21px;top:370.00px;font-size:16px;line-height:16px;color:#1a1a1a;transform:scaleX(0.9868);text-shadow:1px 1.2px 1.6px rgba(0,0,0,0.5);-webkit-text-stroke:0.55px #1a1a1a;">решать</span>
<span class="t" style="left:655.08px;top:370.00px;font-size:16px;line-height:16px;color:#1a1a1a;transform:scaleX(1.0173);text-shadow:1px 1.2px 1.6px rgba(0,0,0,0.5);-webkit-text-stroke:0.55px #1a1a1a;">многие</span>
<span class="t" style="left:713.56px;top:370.00px;font-size:16px;line-height:16px;color:#1a1a1a;transform:scaleX(1.0399);text-shadow:1px 1.2px 1.6px rgba(0,0,0,0.5);-webkit-text-stroke:0.55px #1a1a1a;">проблемы</span>
<span class="t" style="left:170.51px;top:393.00px;font-size:16px;line-height:16px;color:#1a1a1a;transform:scaleX(0.9915);text-shadow:1px 1.2px 1.6px rgba(0,0,0,0.5);-webkit-text-stroke:0.55px #1a1a1a;">и задачи</span>
<span class="t" style="left:239.90px;top:393.00px;font-size:16px;line-height:16px;color:#1a1a1a;transform:scaleX(0.9678);text-shadow:1px 1.2px 1.6px rgba(0,0,0,0.5);-webkit-text-stroke:0.55px #1a1a1a;">более</span>
<span class="t" style="left:288.49px;top:393.00px;font-size:16px;line-height:16px;color:#1a1a1a;transform:scaleX(1.0148);text-shadow:1px 1.2px 1.6px rgba(0,0,0,0.5);-webkit-text-stroke:0.55px #1a1a1a;">качественно</span>
<span class="t" style="left:387.30px;top:393.00px;font-size:16px;line-height:16px;color:#1a1a1a;transform:scaleX(1.0042);text-shadow:1px 1.2px 1.6px rgba(0,0,0,0.5);-webkit-text-stroke:0.55px #1a1a1a;">и быстрее.</span>
<span class="t" style="left:170.49px;top:427.00px;font-size:16px;line-height:16px;color:#1a1a1a;transform:scaleX(1.0127);text-shadow:1px 1.2px 1.6px rgba(0,0,0,0.5);-webkit-text-stroke:0.55px #1a1a1a;">Но мы не сможем</span>
<span class="t" style="left:309.60px;top:427.00px;font-size:16px;line-height:16px;color:#1a1a1a;transform:scaleX(0.9682);text-shadow:1px 1.2px 1.6px rgba(0,0,0,0.5);-webkit-text-stroke:0.55px #1a1a1a;">это</span>
<span class="t" style="left:338.90px;top:427.00px;font-size:16px;line-height:16px;color:#1a1a1a;transform:scaleX(0.9522);text-shadow:1px 1.2px 1.6px rgba(0,0,0,0.5);-webkit-text-stroke:0.55px #1a1a1a;">сделать</span>
<span class="t" style="left:401.10px;top:427.00px;font-size:16px;line-height:16px;color:#1a1a1a;transform:scaleX(0.9498);text-shadow:1px 1.2px 1.6px rgba(0,0,0,0.5);-webkit-text-stroke:0.55px #1a1a1a;">без</span>
<span class="t" style="left:429.55px;top:427.00px;font-size:16px;line-height:16px;color:#1a1a1a;transform:scaleX(0.9544);text-shadow:1px 1.2px 1.6px rgba(0,0,0,0.5);-webkit-text-stroke:0.55px #1a1a1a;">Вашей</span>
<span class="t" style="left:482.70px;top:427.00px;font-size:16px;line-height:16px;color:#1a1a1a;transform:scaleX(1.0208);text-shadow:1px 1.2px 1.6px rgba(0,0,0,0.5);-webkit-text-stroke:0.55px #1a1a1a;">обратной</span>
<span class="t" style="left:558.80px;top:427.00px;font-size:16px;line-height:16px;color:#1a1a1a;transform:scaleX(0.9942);text-shadow:1px 1.2px 1.6px rgba(0,0,0,0.5);-webkit-text-stroke:0.55px #1a1a1a;">связи.</span>
<span class="t" style="left:608.90px;top:427.00px;font-size:16px;line-height:16px;color:#1a1a1a;transform:scaleX(1.0010);text-shadow:1px 1.2px 1.6px rgba(0,0,0,0.5);-webkit-text-stroke:0.55px #1a1a1a;">Любому</span>
<span class="t" style="left:674.80px;top:427.00px;font-size:16px;line-height:16px;color:#1a1a1a;transform:scaleX(1.0057);text-shadow:1px 1.2px 1.6px rgba(0,0,0,0.5);-webkit-text-stroke:0.55px #1a1a1a;">человеку</span>
<span class="t" style="left:170.49px;top:450.00px;font-size:16px;line-height:16px;color:#1a1a1a;transform:scaleX(1.0143);text-shadow:1px 1.2px 1.6px rgba(0,0,0,0.5);-webkit-text-stroke:0.55px #1a1a1a;">важно</span>
<span class="t" style="left:223.00px;top:450.00px;font-size:16px;line-height:16px;color:#1a1a1a;transform:scaleX(0.9846);text-shadow:1px 1.2px 1.6px rgba(0,0,0,0.5);-webkit-text-stroke:0.55px #1a1a1a;">знать,</span>
<span class="t" style="left:272.80px;top:450.00px;font-size:16px;line-height:16px;color:#1a1a1a;transform:scaleX(0.9802);text-shadow:1px 1.2px 1.6px rgba(0,0,0,0.5);-webkit-text-stroke:0.55px #1a1a1a;">что</span>
<span class="t" style="left:302.90px;top:450.00px;font-size:16px;line-height:16px;color:#1a1a1a;transform:scaleX(0.9280);text-shadow:1px 1.2px 1.6px rgba(0,0,0,0.5);-webkit-text-stroke:0.55px #1a1a1a;">его</span>
<span class="t" style="left:330.70px;top:450.00px;font-size:16px;line-height:16px;color:#1a1a1a;transform:scaleX(0.9877);text-shadow:1px 1.2px 1.6px rgba(0,0,0,0.5);-webkit-text-stroke:0.55px #1a1a1a;">действия</span>
<span class="t" style="left:402.88px;top:450.00px;font-size:16px;line-height:16px;color:#1a1a1a;transform:scaleX(1.0193);text-shadow:1px 1.2px 1.6px rgba(0,0,0,0.5);-webkit-text-stroke:0.55px #1a1a1a;">правильные.</span>
<span class="t" style="left:503.62px;top:450.00px;font-size:16px;line-height:16px;color:#1a1a1a;transform:scaleX(0.9806);text-shadow:1px 1.2px 1.6px rgba(0,0,0,0.5);-webkit-text-stroke:0.55px #1a1a1a;">Писатель</span>
<span class="t" style="left:578.20px;top:450.00px;font-size:16px;line-height:16px;color:#1a1a1a;transform:scaleX(0.9463);text-shadow:1px 1.2px 1.6px rgba(0,0,0,0.5);-webkit-text-stroke:0.55px #1a1a1a;">судит</span>
<span class="t" style="left:623.80px;top:450.00px;font-size:16px;line-height:16px;color:#1a1a1a;transform:scaleX(1.0025);text-shadow:1px 1.2px 1.6px rgba(0,0,0,0.5);-webkit-text-stroke:0.55px #1a1a1a;">о своей</span>
<span class="t" style="left:684.51px;top:450.00px;font-size:16px;line-height:16px;color:#1a1a1a;transform:scaleX(0.9895);text-shadow:1px 1.2px 1.6px rgba(0,0,0,0.5);-webkit-text-stroke:0.55px #1a1a1a;">работе по</span>
<span class="t" style="left:171.50px;top:473.00px;font-size:16px;line-height:16px;color:#1a1a1a;transform:scaleX(1.0270);text-shadow:1px 1.2px 1.6px rgba(0,0,0,0.5);-webkit-text-stroke:0.55px #1a1a1a;">отзывам</span>
<span class="t" style="left:241.20px;top:473.00px;font-size:16px;line-height:16px;color:#1a1a1a;transform:scaleX(0.9967);text-shadow:1px 1.2px 1.6px rgba(0,0,0,0.5);-webkit-text-stroke:0.55px #1a1a1a;">читателей.</span>
<span class="t" style="left:325.70px;top:473.00px;font-size:16px;line-height:16px;color:#1a1a1a;transform:scaleX(1.0107);text-shadow:1px 1.2px 1.6px rgba(0,0,0,0.5);-webkit-text-stroke:0.55px #1a1a1a;">Доктор</span>
<span class="t" style="left:384.50px;top:473.00px;font-size:16px;line-height:16px;color:#1a1a1a;transform:scaleX(0.9559);text-shadow:1px 1.2px 1.6px rgba(0,0,0,0.5);-webkit-text-stroke:0.55px #1a1a1a;">судит</span>
<span class="t" style="left:430.50px;top:473.00px;font-size:16px;line-height:16px;color:#1a1a1a;transform:scaleX(0.9858);text-shadow:1px 1.2px 1.6px rgba(0,0,0,0.5);-webkit-text-stroke:0.55px #1a1a1a;">о качестве</span>
<span class="t" style="left:514.60px;top:473.00px;font-size:16px;line-height:16px;color:#1a1a1a;transform:scaleX(1.0067);text-shadow:1px 1.2px 1.6px rgba(0,0,0,0.5);-webkit-text-stroke:0.55px #1a1a1a;">своей</span>
<span class="t" style="left:562.08px;top:473.00px;font-size:16px;line-height:16px;color:#1a1a1a;transform:scaleX(1.0201);text-shadow:1px 1.2px 1.6px rgba(0,0,0,0.5);-webkit-text-stroke:0.55px #1a1a1a;">работы</span>
<span class="t" style="left:622.09px;top:473.00px;font-size:16px;line-height:16px;color:#1a1a1a;transform:scaleX(1.0114);text-shadow:1px 1.2px 1.6px rgba(0,0,0,0.5);-webkit-text-stroke:0.55px #1a1a1a;">по тому,</span>
<span class="t" style="left:687.48px;top:473.00px;font-size:16px;line-height:16px;color:#1a1a1a;transform:scaleX(1.0194);text-shadow:1px 1.2px 1.6px rgba(0,0,0,0.5);-webkit-text-stroke:0.55px #1a1a1a;">как</span>
<span class="t" style="left:718.30px;top:473.00px;font-size:16px;line-height:16px;color:#1a1a1a;transform:scaleX(0.9909);text-shadow:1px 1.2px 1.6px rgba(0,0,0,0.5);-webkit-text-stroke:0.55px #1a1a1a;">быстро</span>
<span class="t" style="left:170.48px;top:496.00px;font-size:16px;line-height:16px;color:#1a1a1a;transform:scaleX(1.0176);text-shadow:1px 1.2px 1.6px rgba(0,0,0,0.5);-webkit-text-stroke:0.55px #1a1a1a;">выздоравливают</span>
<span class="t" style="left:305.10px;top:496.00px;font-size:16px;line-height:16px;color:#1a1a1a;transform:scaleX(0.9751);text-shadow:1px 1.2px 1.6px rgba(0,0,0,0.5);-webkit-text-stroke:0.55px #1a1a1a;">его</span>
<span class="t" style="left:332.99px;top:496.00px;font-size:16px;line-height:16px;color:#1a1a1a;transform:scaleX(1.0104);text-shadow:1px 1.2px 1.6px rgba(0,0,0,0.5);-webkit-text-stroke:0.55px #1a1a1a;">пациенты.</span>
<span class="t" style="left:414.10px;top:496.00px;font-size:16px;line-height:16px;color:#1a1a1a;transform:scaleX(1.0048);text-shadow:1px 1.2px 1.6px rgba(0,0,0,0.5);-webkit-text-stroke:0.55px #1a1a1a;">Чем</span>
<span class="t" style="left:448.91px;top:496.00px;font-size:16px;line-height:16px;color:#1a1a1a;transform:scaleX(0.9895);text-shadow:1px 1.2px 1.6px rgba(0,0,0,0.5);-webkit-text-stroke:0.55px #1a1a1a;">меньше</span>
<span class="t" style="left:513.30px;top:496.00px;font-size:16px;line-height:16px;color:#1a1a1a;transform:scaleX(0.9898);text-shadow:1px 1.2px 1.6px rgba(0,0,0,0.5);-webkit-text-stroke:0.55px #1a1a1a;">системный</span>
<span class="t" style="left:598.90px;top:496.00px;font-size:16px;line-height:16px;color:#1a1a1a;transform:scaleX(1.0293);text-shadow:1px 1.2px 1.6px rgba(0,0,0,0.5);-webkit-text-stroke:0.55px #1a1a1a;">администратор</span>
<span class="t" style="left:722.10px;top:496.00px;font-size:16px;line-height:16px;color:#1a1a1a;transform:scaleX(1.0198);text-shadow:1px 1.2px 1.6px rgba(0,0,0,0.5);-webkit-text-stroke:0.55px #1a1a1a;">бегает и</span>
<span class="t" style="left:171.50px;top:520.00px;font-size:16px;line-height:16px;color:#1a1a1a;transform:scaleX(1.0598);text-shadow:1px 1.2px 1.6px rgba(0,0,0,0.5);-webkit-text-stroke:0.55px #1a1a1a;">что-то</span>
<span class="t" style="left:225.20px;top:520.00px;font-size:16px;line-height:16px;color:#1a1a1a;transform:scaleX(1.0028);text-shadow:1px 1.2px 1.6px rgba(0,0,0,0.5);-webkit-text-stroke:0.55px #1a1a1a;">настраивает,</span>
<span class="t" style="left:326.50px;top:520.00px;font-size:16px;line-height:16px;color:#1a1a1a;transform:scaleX(1.0059);text-shadow:1px 1.2px 1.6px rgba(0,0,0,0.5);-webkit-text-stroke:0.55px #1a1a1a;">тем</span>
<span class="t" style="left:358.80px;top:520.00px;font-size:16px;line-height:16px;color:#1a1a1a;transform:scaleX(1.0006);text-shadow:1px 1.2px 1.6px rgba(0,0,0,0.5);-webkit-text-stroke:0.55px #1a1a1a;">он качественнее</span>
<span class="t" style="left:488.40px;top:520.00px;font-size:16px;line-height:16px;color:#1a1a1a;transform:scaleX(0.9712);text-shadow:1px 1.2px 1.6px rgba(0,0,0,0.5);-webkit-text-stroke:0.55px #1a1a1a;">делает</span>
<span class="t" style="left:544.25px;top:520.00px;font-size:16px;line-height:16px;color:#1a1a1a;transform:scaleX(1.0484);text-shadow:1px 1.2px 1.6px rgba(0,0,0,0.5);-webkit-text-stroke:0.55px #1a1a1a;">работу.</span>
<span class="t" style="left:605.30px;top:520.00px;font-size:16px;line-height:16px;color:#1a1a1a;transform:scaleX(0.9132);text-shadow:1px 1.2px 1.6px rgba(0,0,0,0.5);-webkit-text-stroke:0.55px #1a1a1a;">Так</span>
<span class="t" style="left:634.07px;top:520.00px;font-size:16px;line-height:16px;color:#1a1a1a;transform:scaleX(1.0331);text-shadow:1px 1.2px 1.6px rgba(0,0,0,0.5);-webkit-text-stroke:0.55px #1a1a1a;">и мы не можем</span>
<span class="t" style="left:171.10px;top:543.00px;font-size:16px;line-height:16px;color:#1a1a1a;transform:scaleX(0.9843);text-shadow:1px 1.2px 1.6px rgba(0,0,0,0.5);-webkit-text-stroke:0.55px #1a1a1a;">улучшаться,</span>
<span class="t" style="left:266.80px;top:543.00px;font-size:16px;line-height:16px;color:#1a1a1a;transform:scaleX(0.9610);text-shadow:1px 1.2px 1.6px rgba(0,0,0,0.5);-webkit-text-stroke:0.55px #1a1a1a;">если</span>
<span class="t" style="left:304.80px;top:543.00px;font-size:16px;line-height:16px;color:#1a1a1a;transform:scaleX(0.9985);text-shadow:1px 1.2px 1.6px rgba(0,0,0,0.5);-webkit-text-stroke:0.55px #1a1a1a;">не будем</span>
<span class="t" style="left:376.47px;top:543.00px;font-size:16px;line-height:16px;color:#1a1a1a;transform:scaleX(1.0265);text-shadow:1px 1.2px 1.6px rgba(0,0,0,0.5);-webkit-text-stroke:0.55px #1a1a1a;">получать</span>
<span class="t" style="left:451.10px;top:543.00px;font-size:16px;line-height:16px;color:#1a1a1a;transform:scaleX(1.0140);text-shadow:1px 1.2px 1.6px rgba(0,0,0,0.5);-webkit-text-stroke:0.55px #1a1a1a;">ответов</span>
<span class="t" style="left:514.60px;top:543.00px;font-size:16px;line-height:16px;color:#1a1a1a;transform:scaleX(0.9845);text-shadow:1px 1.2px 1.6px rgba(0,0,0,0.5);-webkit-text-stroke:0.55px #1a1a1a;">от Вас.</span>
<span class="t" style="left:175.30px;top:149.00px;font-size:8.5px;line-height:8.5px;color:#3a3a3a;transform:scaleX(1.0589);">ab</span>
<span class="t" style="left:380.00px;top:102.61px;font-size:5.8px;line-height:5.8px;color:#3b6fc0;transform:scaleX(0.7500);font-weight:bold;">1</span>
<span class="t" style="left:380.00px;top:108.61px;font-size:5.8px;line-height:5.8px;color:#3b6fc0;transform:scaleX(1.0000);font-weight:bold;">2</span>
<span class="t" style="left:380.00px;top:114.61px;font-size:5.8px;line-height:5.8px;color:#3b6fc0;transform:scaleX(0.7500);font-weight:bold;">3</span>
<span class="t" style="left:412.90px;top:102.61px;font-size:5.8px;line-height:5.8px;color:#3b6fc0;transform:scaleX(0.7250);font-weight:bold;">1</span>
<span class="t" style="left:417.00px;top:107.61px;font-size:6.5px;line-height:6.5px;color:#3b6fc0;transform:scaleX(0.8500);font-weight:bold;">a</span>
<span class="t" style="left:422.30px;top:114.00px;font-size:6.5px;line-height:6.5px;color:#3b6fc0;transform:scaleX(0.5000);font-weight:bold;">i</span>
<span class="t" style="left:423.50px;top:148.80px;font-size:8.5px;line-height:8.5px;color:#3b6fc0;transform:scaleX(1.0833);font-weight:bold;">А</span>
<span class="t" style="left:423.60px;top:156.80px;font-size:9px;line-height:9px;color:#5d6b80;transform:scaleX(1.0333);font-weight:bold;">Я</span>
<span class="t" style="left:456.00px;top:148.80px;font-size:14.5px;line-height:14.5px;color:#5a5a5a;transform:scaleX(1.2500);">¶</span>
<span class="t" style="left:170.85px;top:199.31px;font-size:47.8px;line-height:47.8px;color:#1767c4;transform:scaleX(0.8242);-webkit-text-stroke:2.0px #1767c4;text-shadow:1.5px 1.5px 2px rgba(0,0,0,0.5);-webkit-box-reflect:below -14.1px linear-gradient(to bottom, rgba(0,0,0,0) 15.5px, rgba(0,0,0,0.6) 40.5px);">О</span>
<span class="t" style="left:214.19px;top:205.21px;font-size:40.5px;line-height:40.5px;color:#1767c4;transform:scaleX(1.1528);-webkit-text-stroke:1.5px #1767c4;text-shadow:1.5px 1.5px 2px rgba(0,0,0,0.5);-webkit-box-reflect:below -11.8px linear-gradient(to bottom, rgba(0,0,0,0) 9.3px, rgba(0,0,0,0.6) 34.3px);">нас</span>
</body></html>
